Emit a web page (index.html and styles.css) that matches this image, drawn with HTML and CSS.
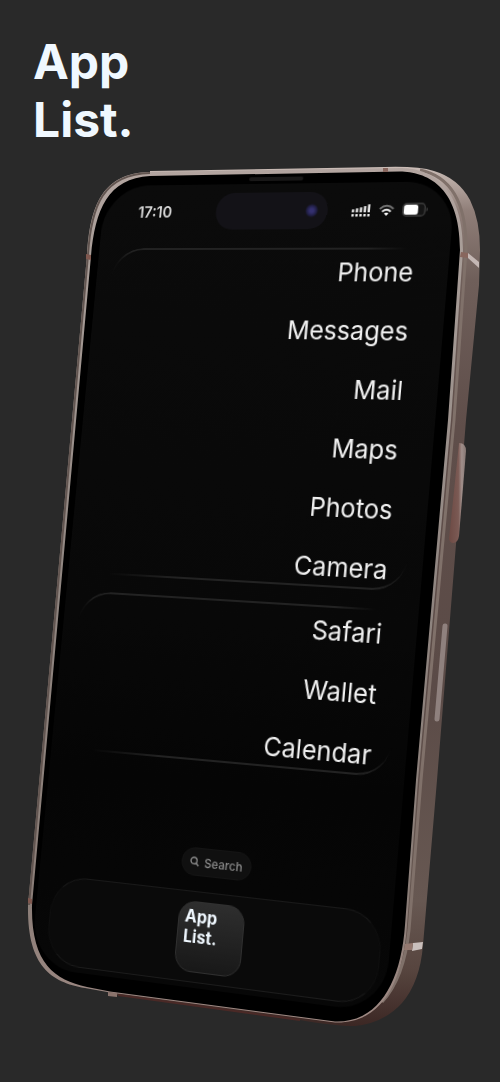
FILE: index.html
```html
<!DOCTYPE html>
<html lang="en">
<head>
<meta charset="utf-8">
<meta name="viewport" content="width=device-width, initial-scale=1">
<title>App List.</title>
<link rel="stylesheet" href="styles.css">
</head>
<body>
<main class="page">
  <h1 class="title">App<br>List.</h1>
  <section class="stage" aria-label="Phone home screen">
    <svg class="body" viewBox="0 150 500 932" aria-hidden="true">
      <defs>
        <linearGradient id="side" x1="0" y1="168" x2="0" y2="1030" gradientUnits="userSpaceOnUse">
          <stop offset="0" stop-color="#c9bbb5"/>
          <stop offset=".05" stop-color="#8f7e78"/>
          <stop offset=".13" stop-color="#6f5f5a"/>
          <stop offset=".3" stop-color="#5f4e4a"/>
          <stop offset=".6" stop-color="#5b4b47"/>
          <stop offset=".85" stop-color="#675852"/>
          <stop offset=".93" stop-color="#57453f"/>
          <stop offset="1" stop-color="#3a2522"/>
        </linearGradient>
        <linearGradient id="rim" x1="0" y1="168" x2="0" y2="1024" gradientUnits="userSpaceOnUse">
          <stop offset="0" stop-color="#b3a5a0"/>
          <stop offset=".1" stop-color="#a89d98"/>
          <stop offset=".5" stop-color="#8f8580"/>
          <stop offset=".85" stop-color="#8a7d77"/>
          <stop offset="1" stop-color="#a08a84"/>
        </linearGradient>
        <linearGradient id="key" x1="0" x2="1" y1="0" y2="0">
          <stop offset="0" stop-color="#6d4a44"/>
          <stop offset=".55" stop-color="#7b5a54"/>
          <stop offset=".75" stop-color="#a08f8b"/>
          <stop offset="1" stop-color="#857672"/>
        </linearGradient>
      </defs>
      <path d="M150 171L385 167Q418 166 434 171Q458 178 470 200Q480 220 480 250L479 285L466 420L437 780L423 945Q420 982 402 1003Q384 1023 355 1026Q335 1026 300 1020L110 994L150 500Z" fill="url(#side)"/>
      <path d="M420 170Q467 180 466 250L454 420L421 780L409 930Q404 978 382 1002" fill="none" stroke="#80716a" stroke-width="3"/>
      <path d="M28 905L87 255C90 206 102 173 150 172L400 168C425 168 463 180 463 250L451 420L418 780L407 925C403 985 380 1024 335 1022.500L110 992.500L85 988C50 982 27 965 28 905Z" fill="url(#rim)"/>
      <path d="M29 905L88 255C91 206 103 174 150 173" fill="none" stroke="#625550" stroke-width="2"/>
      <path d="M32 905L91 256C95 210 108 178 150 176L400 171.500C425 172 460 184 460 250L448 420L416 780L405 925C401 983 378 1023 335 1021.500L110 991.500L87 987C54 980 31 963 32 905Z" fill="#000"/>
      <path d="M459 443Q466 443 466 451L459 536Q458 543 453 543Q450 543 449 539Z" fill="url(#key)"/>
      <path d="M445 626L437 719" fill="none" stroke="#8f817e" stroke-width="5" stroke-linecap="round"/>
      <path d="M468 253L479 262L479 268L468 258Z" fill="#c4b7b4"/>
      <path d="M461 252L468 253L468 258L460 257Z" fill="#88665d"/>
      <path d="M413 943L423 942L422 949L412 951Z" fill="#c9bfbc"/>
      <path d="M405 944L413 943L412 950L404 950Z" fill="#94786f"/>
      <path d="M383 168H388V172H383Z" fill="#88665d"/>
      <path d="M86 254L91 255V260L86 259Z" fill="#80584f"/>
      <path d="M28 898L32 899V904L28 903Z" fill="#80584f"/>
      <path d="M108 992L117 993V997L108 996Z" fill="#8a736c"/>
      <path d="M118 995L300 1020" fill="none" stroke="#4a2926" stroke-width="2"/>
    </svg>

    <div class="face">
      <span class="speaker"></span>
      <div class="display">
        <header class="status">
          <time class="clock">17:10</time>
          <span class="island"><span class="lens"></span></span>
          <span class="indicators">
            <svg class="signal" viewBox="0 0 22 14" role="img" aria-label="Signal">
              <g fill="none" stroke="#f4f4f4" stroke-width="2.600">
                <path d="M1.500 5.500V9M6 4.500V9M10.500 3.500V9M15 2V9M19.500 0V9"/>
                <path d="M1.500 10.800V13.600M6 10.800V13.600M10.500 10.800V13.600M15 10.800V13.600M19.500 10.800V13.600"/>
              </g>
            </svg>
            <svg class="wifi" viewBox="0 0 18 13" role="img" aria-label="Wi-Fi">
              <g fill="none" stroke-width="2.200">
                <path d="M1 4.800Q9-2.400 17 4.800" stroke="#707070"/>
                <path d="M4 7.800Q9 3.500 14 7.800" stroke="#e6e6e6"/>
              </g>
              <path d="M6.300 10Q9 7.800 11.700 10L9 12.800Z" fill="#fff"/>
            </svg>
            <svg class="battery" viewBox="0 0 27 14" role="img" aria-label="Battery">
              <rect x=".8" y=".8" width="22.500" height="12.400" rx="3.800" fill="#151515" stroke="#3c3c3c" stroke-width="1.400"/>
              <rect x="1.800" y="2" width="14.500" height="10" rx="2.500" fill="#fff"/>
              <path d="M24.800 4.500Q27 6.800 24.800 9.200Z" fill="#555"/>
            </svg>
          </span>
        </header>

        <nav class="lists" aria-label="Apps">
          <ul class="card">
            <li><a href="#phone">Phone</a></li>
            <li><a href="#messages">Messages</a></li>
            <li><a href="#mail">Mail</a></li>
            <li><a href="#maps">Maps</a></li>
            <li><a href="#photos">Photos</a></li>
            <li><a href="#camera">Camera</a></li>
          </ul>
          <ul class="card">
            <li><a href="#safari">Safari</a></li>
            <li><a href="#wallet">Wallet</a></li>
            <li><a href="#calendar">Calendar</a></li>
          </ul>
        </nav>

        <button class="search" type="button">
          <svg class="glass" viewBox="0 0 10 10" aria-hidden="true">
            <circle cx="4.200" cy="4.200" r="3.200"/><path d="M6.600 6.600L9.300 9.300"/>
          </svg>
          Search
        </button>
        <footer class="dock">
          <button class="app" type="button">App<br>List.</button>
        </footer>
      </div>
    </div>
  </section>
</main>
</body>
</html>
```
FILE: styles.css
```css
* {
  box-sizing: border-box;
}

body {
  margin: 0;
  background: #292929;
  color: #f0f8ff;
  font-family: Inter, "Liberation Sans", sans-serif;
}

.page {
  max-width: 500px;
  margin: 0 auto;
  overflow: hidden;
}

.title {
  margin: 0;
  padding: 33px 33px 1px;
  font-size: 48px;
  font-weight: 700;
  line-height: 58px;
}

/* The drawn body and the tilted face share one grid cell. */
.stage {
  display: grid;
  align-items: start;
  justify-items: start;
}

.body,
.face {
  grid-area: 1 / 1;
}

.body {
  display: block;
  width: 100%;
}

/* Perspective of the handset's front plane. */
.face {
  display: grid;
  width: 400px;
  height: 840px;
  padding: 14px 15px 15px 10px;
  transform-origin: 0 0;
  transform: matrix3d(0.85878, -0.01775, 0, -0.0001615, -0.093405, 0.93776, 0, -0.00002765, 0, 0, 1, 0, 98, 23, 0, 1);
}

.speaker,
.display {
  grid-area: 1 / 1;
}

.speaker {
  justify-self: center;
  width: 58px;
  height: 4px;
  margin-top: -7px;
  border-radius: 2px;
  background: #191818;
}

.display {
  display: flex;
  flex-direction: column;
  padding: 0 9px 5px 16px;
  border-radius: 50px;
  background: linear-gradient(#0b0b0b, #080808 55%, #050505 75%, #070707);
}

.status {
  display: grid;
  grid-template-columns: 110px 120px 1fr;
  align-items: center;
  height: 38px;
  margin: 9px 0 19px;
}

.clock {
  padding-left: 24px;
  color: #d8d8d8;
  font-size: 16px;
  font-weight: 600;
  line-height: 20px;
}

.island {
  display: flex;
  align-items: center;
  justify-content: flex-end;
  height: 38px;
  padding-right: 10px;
  border-radius: 19px;
  background: #131217;
}

.lens {
  width: 14px;
  height: 14px;
  border-radius: 50%;
  background: radial-gradient(#34306f 20%, #211f47 50%, #131217 72%);
}

.indicators {
  display: flex;
  align-items: center;
  justify-content: flex-end;
  gap: 8px;
  padding-right: 16px;
}

.signal {
  width: 20px;
  height: 13px;
}

.wifi {
  width: 16px;
  height: 13px;
}

.battery {
  width: 27px;
  height: 14px;
}

.lists {
  display: flex;
  flex-direction: column;
  gap: 18px;
}

.card {
  position: relative;
  display: flex;
  flex-direction: column;
  gap: 14px;
  margin: 0 6px 0 0;
  padding: 0 20px;
  list-style: none;
  text-align: right;
}

.card li {
  height: 45px;
}

.card a {
  color: #f0f0f0;
  font-size: 26px;
  font-weight: 400;
  line-height: 49px;
  text-decoration: none;
}

/* Light catching the glass: top edge with the left corner, bottom edge with the right. */
.card::before,
.card::after {
  content: "";
  position: absolute;
  right: 0;
  left: 0;
  height: 40px;
  pointer-events: none;
}

.card::before {
  top: 0;
  border-top: 2px solid #242424;
  border-left: 1px solid #1c1c1c;
  border-top-left-radius: 34px;
  mask-image: linear-gradient(to right, #000 80%, transparent 92%), linear-gradient(#000, transparent 70%);
  mask-composite: intersect;
}

.card::after {
  bottom: 0;
  border-right: 1px solid #1c1c1c;
  border-bottom: 2px solid #242424;
  border-bottom-right-radius: 34px;
  mask-image: linear-gradient(to left, #000 70%, transparent 92%), linear-gradient(to top, #000, transparent 70%);
  mask-composite: intersect;
}

button {
  border: 0;
  color: inherit;
  font-family: inherit;
}

.search {
  display: flex;
  align-items: center;
  align-self: center;
  justify-content: center;
  gap: 5px;
  width: 74px;
  height: 28px;
  margin-top: auto;
  padding: 0;
  border: 1px solid #141414;
  border-radius: 14px;
  background: #101010;
  color: #8c8c8c;
  font-size: 12px;
  font-weight: 500;
}

.glass {
  width: 10px;
  height: 10px;
  fill: none;
  stroke: #8c8c8c;
  stroke-width: 1.4;
}

.dock {
  display: flex;
  align-items: center;
  justify-content: center;
  height: 90px;
  margin-top: 15px;
  border: 1px solid #0e0e0e;
  border-top-color: #191919;
  border-bottom-color: #1c1c1c;
  border-radius: 38px;
  background: #0a0a0a;
}

.app {
  display: flex;
  align-items: flex-start;
  width: 70px;
  height: 70px;
  padding: 4px 6px;
  border: 1px solid #303030;
  border-radius: 18px;
  background: linear-gradient(#2e2e2e, #181818);
  color: #f0f8ff;
  font-size: 17px;
  font-weight: 700;
  line-height: 20px;
  text-align: left;
}
```
